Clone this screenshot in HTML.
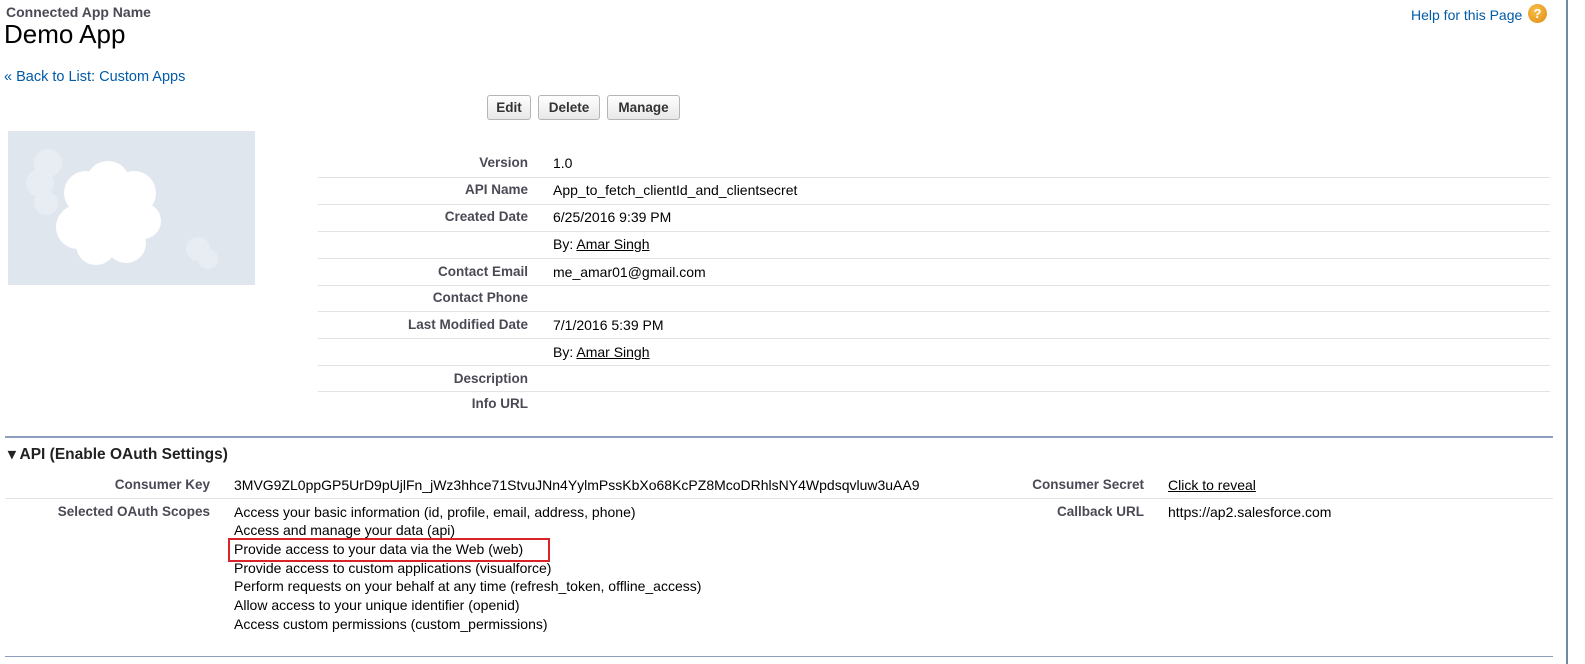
<!DOCTYPE html>
<html><head><meta charset="utf-8">
<style>
*{margin:0;padding:0;box-sizing:border-box}
body{width:1585px;height:664px;background:#fff;font-family:"Liberation Sans",Arial,sans-serif;color:#000;position:relative;overflow:hidden}
.a{position:absolute;white-space:nowrap}
.lbl{position:absolute;right:1057px;font-weight:bold;font-size:13.5px;color:#4a4a56;white-space:nowrap}
.val{position:absolute;left:553px;font-size:14px;white-space:nowrap}
.sep{position:absolute;left:318px;width:1232px;height:1px;background:#e3e3e3}
.btn{position:absolute;top:95px;height:25px;border:1px solid #b5b5b5;border-radius:3px;background:linear-gradient(#fff,#e8e8e8);font-weight:bold;font-size:13.5px;color:#333;text-align:center;line-height:23px}
u{text-decoration:underline}
.sl{position:absolute;left:234px;font-size:14px;white-space:nowrap}
.k{position:absolute;font-weight:bold;font-size:13.5px;color:#4a4a56;white-space:nowrap}
</style></head><body>
<div class="a" style="left:6px;top:4px;font-size:14px;font-weight:bold;color:#4a4a56">Connected App Name</div>
<div class="a" style="left:4px;top:19px;font-size:26px;color:#000">Demo App</div>
<div class="a" style="left:4px;top:69px;font-size:14.5px;color:#015ba7">« Back to List: Custom Apps</div>
<div class="a" style="left:1411px;top:7px;font-size:14px;color:#015ba7">Help for this Page</div>
<div class="a" style="left:1528px;top:4px;width:19px;height:19px;border-radius:50%;background:radial-gradient(circle at 40% 35%,#f7c04a,#e08a10);color:#fff;font-weight:bold;font-size:13px;text-align:center;line-height:19px">?</div>
<div class="a" style="left:1566px;top:0;width:2px;height:664px;background:#6f8aa0"></div>

<div class="btn" style="left:487px;width:44px">Edit</div>
<div class="btn" style="left:538px;width:62px">Delete</div>
<div class="btn" style="left:607px;width:73px">Manage</div>

<div class="a" style="left:8px;top:131px;width:247px;height:154px;background:#dfe6ee;overflow:hidden">
<svg width="247" height="154" viewBox="0 0 247 154">
<g fill="#e7edf3"><circle cx="40" cy="32" r="14"/><circle cx="32" cy="52" r="14"/><circle cx="38" cy="72" r="12"/><circle cx="190" cy="118" r="12"/><circle cx="200" cy="128" r="10"/></g>
<g fill="#fff"><circle cx="78" cy="62" r="22"/><circle cx="100" cy="52" r="22"/><circle cx="126" cy="62" r="22"/><circle cx="135" cy="90" r="18"/><circle cx="118" cy="112" r="20"/><circle cx="88" cy="114" r="20"/><circle cx="70" cy="96" r="22"/><circle cx="102" cy="85" r="34"/></g>
</svg></div>

<div class="lbl" style="top:155px">Version</div><div class="val" style="top:155px">1.0</div>
<div class="sep" style="top:177px"></div>
<div class="lbl" style="top:182px">API Name</div><div class="val" style="top:182px">App_to_fetch_clientId_and_clientsecret</div>
<div class="sep" style="top:204px"></div>
<div class="lbl" style="top:209px">Created Date</div><div class="val" style="top:209px">6/25/2016 9:39 PM</div>
<div class="sep" style="top:231px"></div>
<div class="val" style="top:236px">By: <u>Amar Singh</u></div>
<div class="sep" style="top:258px"></div>
<div class="lbl" style="top:264px">Contact Email</div><div class="val" style="top:264px">me_amar01@gmail.com</div>
<div class="sep" style="top:285px"></div>
<div class="lbl" style="top:290px">Contact Phone</div>
<div class="sep" style="top:311px"></div>
<div class="lbl" style="top:317px">Last Modified Date</div><div class="val" style="top:317px">7/1/2016 5:39 PM</div>
<div class="sep" style="top:338px"></div>
<div class="val" style="top:344px">By: <u>Amar Singh</u></div>
<div class="sep" style="top:365px"></div>
<div class="lbl" style="top:371px">Description</div>
<div class="sep" style="top:391px"></div>
<div class="lbl" style="top:396px">Info URL</div>

<div class="a" style="left:5px;top:436px;width:1548px;height:2px;background:#8e9dbe"></div>
<div class="a" style="left:8px;top:445px;font-size:15.5px;font-weight:bold;color:#222">▾ API (Enable OAuth Settings)</div>

<div class="k" style="right:1375px;top:477px">Consumer Key</div>
<div class="a" style="left:234px;top:477px;font-size:14px">3MVG9ZL0ppGP5UrD9pUjlFn_jWz3hhce71StvuJNn4YylmPssKbXo68KcPZ8McoDRhlsNY4Wpdsqvluw3uAA9</div>
<div class="k" style="right:441px;top:477px">Consumer Secret</div>
<div class="a" style="left:1168px;top:477px;font-size:14px"><u>Click to reveal</u></div>
<div class="a" style="left:5px;top:498px;width:1548px;height:1px;background:#e3e3e3"></div>

<div class="k" style="right:1375px;top:504px">Selected OAuth Scopes</div>
<div class="k" style="right:441px;top:504px">Callback URL</div>
<div class="a" style="left:1168px;top:504px;font-size:14px">https://ap2.salesforce.com</div>
<div class="sl" style="top:504px">Access your basic information (id, profile, email, address, phone)</div>
<div class="sl" style="top:522px">Access and manage your data (api)</div>
<div class="sl" style="top:541px">Provide access to your data via the Web (web)</div>
<div class="sl" style="top:560px">Provide access to custom applications (visualforce)</div>
<div class="sl" style="top:578px">Perform requests on your behalf at any time (refresh_token, offline_access)</div>
<div class="sl" style="top:597px">Allow access to your unique identifier (openid)</div>
<div class="sl" style="top:616px">Access custom permissions (custom_permissions)</div>
<div class="a" style="left:228px;top:538px;width:322px;height:24px;border:2px solid #d9232b"></div>

<div class="a" style="left:5px;top:656px;width:1548px;height:1px;background:#8e9dbe"></div>
</body></html>
